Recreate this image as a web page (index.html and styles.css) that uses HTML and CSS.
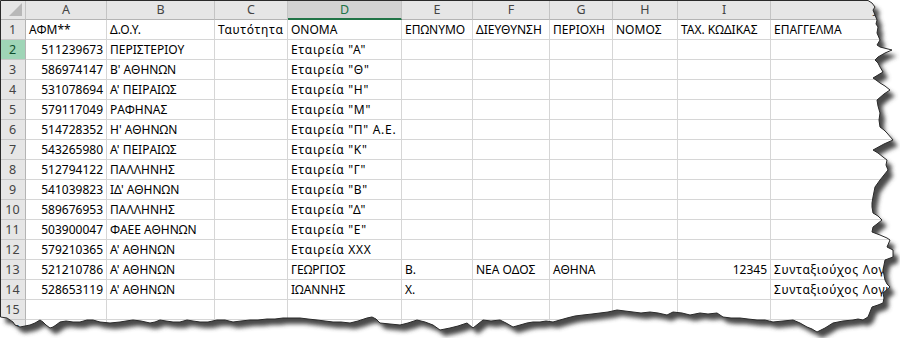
FILE: index.html
```html
<!DOCTYPE html>
<html lang="el">
<head>
<meta charset="utf-8">
<title>Sheet</title>
<link rel="stylesheet" href="styles.css">
</head>
<body>
<div class="page">
  <div class="sheet">
    <div class="row head">
      <div class="corner"><span class="tri"></span></div>
      <div class="ch">A</div><div class="ch">B</div><div class="ch">C</div><div class="ch sel">D</div><div class="ch">E</div><div class="ch">F</div><div class="ch">G</div><div class="ch">H</div><div class="ch">I</div><div class="ch">J</div>
    </div>
    <div class="row"><div class="rh">1</div><div class="c">ΑΦΜ**</div><div class="c">Δ.Ο.Υ.</div><div class="c lc">Ταυτότητα</div><div class="c">ΟΝΟΜΑ</div><div class="c">ΕΠΩΝΥΜΟ</div><div class="c">ΔΙΕΥΘΥΝΣΗ</div><div class="c">ΠΕΡΙΟΧΗ</div><div class="c">ΝΟΜΟΣ</div><div class="c">ΤΑΧ. ΚΩΔΙΚΑΣ</div><div class="c">ΕΠΑΓΓΕΛΜΑ</div></div>
    <div class="row"><div class="rh sel">2</div><div class="c n">511239673</div><div class="c">ΠΕΡΙΣΤΕΡΙΟΥ</div><div class="c"></div><div class="c lc">Εταιρεία "Α"</div><div class="c"></div><div class="c"></div><div class="c"></div><div class="c"></div><div class="c"></div><div class="c"></div></div>
    <div class="row"><div class="rh">3</div><div class="c n">586974147</div><div class="c">Β' ΑΘΗΝΩΝ</div><div class="c"></div><div class="c lc">Εταιρεία "Θ"</div><div class="c"></div><div class="c"></div><div class="c"></div><div class="c"></div><div class="c"></div><div class="c"></div></div>
    <div class="row"><div class="rh">4</div><div class="c n">531078694</div><div class="c">Α' ΠΕΙΡΑΙΩΣ</div><div class="c"></div><div class="c lc">Εταιρεία "Η"</div><div class="c"></div><div class="c"></div><div class="c"></div><div class="c"></div><div class="c"></div><div class="c"></div></div>
    <div class="row"><div class="rh">5</div><div class="c n">579117049</div><div class="c">ΡΑΦΗΝΑΣ</div><div class="c"></div><div class="c lc">Εταιρεία "Μ"</div><div class="c"></div><div class="c"></div><div class="c"></div><div class="c"></div><div class="c"></div><div class="c"></div></div>
    <div class="row"><div class="rh">6</div><div class="c n">514728352</div><div class="c">Η' ΑΘΗΝΩΝ</div><div class="c"></div><div class="c lc">Εταιρεία "Π" Α.Ε.</div><div class="c"></div><div class="c"></div><div class="c"></div><div class="c"></div><div class="c"></div><div class="c"></div></div>
    <div class="row"><div class="rh">7</div><div class="c n">543265980</div><div class="c">Α' ΠΕΙΡΑΙΩΣ</div><div class="c"></div><div class="c lc">Εταιρεία "Κ"</div><div class="c"></div><div class="c"></div><div class="c"></div><div class="c"></div><div class="c"></div><div class="c"></div></div>
    <div class="row"><div class="rh">8</div><div class="c n">512794122</div><div class="c">ΠΑΛΛΗΝΗΣ</div><div class="c"></div><div class="c lc">Εταιρεία "Γ"</div><div class="c"></div><div class="c"></div><div class="c"></div><div class="c"></div><div class="c"></div><div class="c"></div></div>
    <div class="row"><div class="rh">9</div><div class="c n">541039823</div><div class="c">ΙΔ' ΑΘΗΝΩΝ</div><div class="c"></div><div class="c lc">Εταιρεία "Β"</div><div class="c"></div><div class="c"></div><div class="c"></div><div class="c"></div><div class="c"></div><div class="c"></div></div>
    <div class="row"><div class="rh">10</div><div class="c n">589676953</div><div class="c">ΠΑΛΛΗΝΗΣ</div><div class="c"></div><div class="c lc">Εταιρεία "Δ"</div><div class="c"></div><div class="c"></div><div class="c"></div><div class="c"></div><div class="c"></div><div class="c"></div></div>
    <div class="row"><div class="rh">11</div><div class="c n">503900047</div><div class="c">ΦΑΕΕ ΑΘΗΝΩΝ</div><div class="c"></div><div class="c lc">Εταιρεία "Ε"</div><div class="c"></div><div class="c"></div><div class="c"></div><div class="c"></div><div class="c"></div><div class="c"></div></div>
    <div class="row"><div class="rh">12</div><div class="c n">579210365</div><div class="c">Α' ΑΘΗΝΩΝ</div><div class="c"></div><div class="c lc">Εταιρεία ΧΧΧ</div><div class="c"></div><div class="c"></div><div class="c"></div><div class="c"></div><div class="c"></div><div class="c"></div></div>
    <div class="row"><div class="rh">13</div><div class="c n">521210786</div><div class="c">Α' ΑΘΗΝΩΝ</div><div class="c"></div><div class="c">ΓΕΩΡΓΙΟΣ</div><div class="c">Β.</div><div class="c">ΝΕΑ ΟΔΟΣ</div><div class="c">ΑΘΗΝΑ</div><div class="c"></div><div class="c n">12345</div><div class="c lc">Συνταξιούχος Λογιστής</div></div>
    <div class="row"><div class="rh">14</div><div class="c n">528653119</div><div class="c">Α' ΑΘΗΝΩΝ</div><div class="c"></div><div class="c">ΙΩΑΝΝΗΣ</div><div class="c">Χ.</div><div class="c"></div><div class="c"></div><div class="c"></div><div class="c"></div><div class="c lc">Συνταξιούχος Λογιστής</div></div>
    <div class="row"><div class="rh">15</div><div class="c"></div><div class="c"></div><div class="c"></div><div class="c"></div><div class="c"></div><div class="c"></div><div class="c"></div><div class="c"></div><div class="c"></div><div class="c"></div></div>
    <div class="row"><div class="rh">16</div><div class="c"></div><div class="c"></div><div class="c"></div><div class="c"></div><div class="c"></div><div class="c"></div><div class="c"></div><div class="c"></div><div class="c"></div><div class="c"></div></div>
  </div>

  <svg class="torn" width="900" height="338" viewBox="0 0 900 338" aria-hidden="true">
    <defs>
      <path id="paper" d="M0.5,0.5 L868,0.5 L872,3 L875,7 L873,10 L875,15 L877,20 L876,24 L878,27 L877,33 L880,40 L877,45 L880,47 L892,50 L885,53 L878,57 L875,60 L878,63 L880,67 L883,72 L878,75 L873,78 L876,80 L880,83 L885,86 L890,90 L884,94 L877,100 L878,106 L880,113 L879,120 L880,127 L884,130 L887,133 L893,140 L884,144 L873,150 L878,153 L883,157 L887,160 L886,165 L888,170 L884,175 L880,180 L875,187 L874,192 L873,197 L872,203 L872,207 L873,213 L878,216 L882,220 L877,224 L873,227 L872,232 L880,235 L887,238 L890,240 L887,247 L893,250 L893,257 L885,260 L884,265 L883,270 L884,275 L885,280 L887,284 L890,287 L883,293 L884,298 L883,303 L878,305 L872,307 L870,312 L868,317 L863,320 L858,319 L853,320 L843,321 L833,323 L825,328 L817,332 L812,329 L807,327 L800,323 L793,320 L783,321 L773,322 L765,320 L757,320 L748,319 L740,318 L731,318 L723,317 L717,313 L708,314 L700,313 L690,315 L682,313 L673,312 L667,315 L658,313 L650,312 L641,313 L633,312 L625,311 L617,310 L608,312 L600,313 L592,314 L583,315 L575,316 L567,318 L560,320 L553,322 L546,321 L540,322 L533,322 L527,323 L520,325 L513,327 L506,323 L500,320 L491,321 L483,320 L478,324 L473,328 L467,323 L458,326 L450,328 L440,330 L433,325 L425,322 L417,320 L408,323 L400,325 L390,324 L380,323 L376,319 L372,317 L367,318 L358,321 L350,323 L341,322 L333,322 L325,321 L317,320 L308,319 L300,318 L292,318 L283,318 L275,319 L267,319 L258,320 L250,320 L241,321 L233,322 L225,320 L217,320 L208,322 L200,322 L193,321 L187,320 L180,322 L173,322 L166,321 L160,320 L155,322 L150,323 L141,321 L133,320 L126,321 L120,322 L110,323 L100,322 L93,320 L87,320 L80,322 L73,322 L66,321 L60,322 L56,325 L53,327 L50,328 L46,325 L43,322 L40,320 L35,323 L30,325 L25,326 L20,327 L15,325 L13,322 L10,320 L7,318 L0.5,317 Z"/>
      <mask id="outside" maskUnits="userSpaceOnUse" x="0" y="0" width="900" height="338">
        <rect x="0" y="0" width="900" height="338" fill="white"/>
        <use href="#paper" fill="black"/>
      </mask>
      <filter id="blur" x="-10%" y="-10%" width="120%" height="120%">
        <feGaussianBlur stdDeviation="2.2"/>
      </filter>
    </defs>
    <g mask="url(#outside)">
      <rect x="0" y="0" width="900" height="338" fill="#ffffff"/>
      <use href="#paper" transform="translate(5,6)" fill="#484848" filter="url(#blur)"/>
    </g>
    <use href="#paper" fill="none" stroke="#2a2a2a" stroke-width="1"/>
  </svg>
</div>
</body>
</html>
```
FILE: styles.css
```css
html, body {
  margin: 0;
  padding: 0;
  background: #ffffff;
}

.page {
  position: relative;
  width: 900px;
  height: 338px;
  overflow: hidden;
  font-family: "Noto Sans", "Open Sans", "DejaVu Sans", sans-serif;
  font-size: 12px;
  color: #000;
}

.sheet {
  display: flex;
  flex-direction: column;
  width: 1000px;
}

.torn {
  position: absolute;
  top: 0;
  left: 0;
  display: block;
}

.row {
  display: grid;
  grid-template-columns: 26px 81px 108px 73px 114px 71px 77px 63px 65px 93px 210px;
  height: 20px;
}

.row > div {
  box-sizing: border-box;
  height: 20px;
  line-height: 20px;
  white-space: nowrap;
  border-right: 1px solid #d6d6d6;
  border-bottom: 1px solid #d6d6d6;
}

.head > div {
  background: #e6e6e6;
  color: #444;
  text-align: center;
  line-height: 19px;
  font-size: 12.5px;
  border-right: 1px solid #c4c4c4;
  border-bottom: 1px solid #b4b4b4;
}

.corner {
  position: relative;
}

.corner .tri {
  position: absolute;
  right: 3px;
  bottom: 3px;
  width: 0;
  height: 0;
  border-left: 13px solid transparent;
  border-bottom: 13px solid #b8b8b8;
}

.head .sel {
  background: #d2d2d2;
  color: #217346;
  border-bottom: 2px solid #217346;
}

.rh {
  background: #e6e6e6;
  color: #444;
  text-align: center;
  font-size: 12.5px;
  border-right: 1px solid #b4b4b4 !important;
  border-bottom: 1px solid #c8c8c8 !important;
}

.rh.sel {
  background: #9fd5b7;
  color: #0e4e2c;
}

.c {
  padding: 0 3px 0 3px;
  overflow: visible;
}

.c.lc {
  letter-spacing: 0.7px;
}

.c.n {
  text-align: right;
}
```
